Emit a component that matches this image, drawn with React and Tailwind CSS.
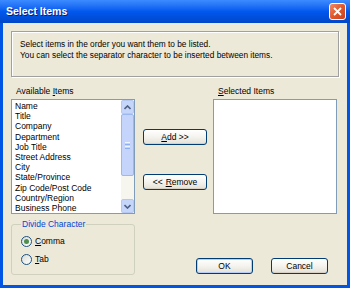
import { useState } from "react";

const items = [
  "Name",
  "Title",
  "Company",
  "Department",
  "Job Title",
  "Street Address",
  "City",
  "State/Province",
  "Zip Code/Post Code",
  "Country/Region",
  "Business Phone",
];

function XpButton({ children, className = "" }) {
  return (
    <button
      type="button"
      className={
        "flex items-center justify-center rounded-[3px] border border-[#003C74] bg-gradient-to-b from-white via-[#F4F3EE] to-[#E3E1D6] text-[8.5px] leading-none text-black shadow-[inset_0_-1px_0_#D6D0C5] " +
        className
      }
    >
      {children}
    </button>
  );
}

function ScrollBar() {
  return (
    <div className="flex w-[13px] flex-col bg-[#F6F5EE]">
      <div className="flex h-[14px] items-center justify-center rounded-[2px] border border-[#B5C8F2] bg-[#C6D6FB]">
        <svg width="7" height="5" viewBox="0 0 7 5">
          <path d="M0.5 4 L3.5 1 L6.5 4" fill="none" stroke="#4D6185" strokeWidth="1.6" />
        </svg>
      </div>
      <div className="flex h-[62px] flex-col items-center justify-center gap-[1px] rounded-[2px] border border-[#9DB7EF] bg-[#C4D4FA]">
        <div className="h-[1px] w-[5px] bg-[#EEF4FE]" />
        <div className="h-[1px] w-[5px] bg-[#8CB0F8]" />
        <div className="h-[1px] w-[5px] bg-[#EEF4FE]" />
        <div className="h-[1px] w-[5px] bg-[#8CB0F8]" />
      </div>
      <div className="flex-1" />
      <div className="flex h-[14px] items-center justify-center rounded-[2px] border border-[#B5C8F2] bg-[#C6D6FB]">
        <svg width="7" height="5" viewBox="0 0 7 5">
          <path d="M0.5 1 L3.5 4 L6.5 1" fill="none" stroke="#4D6185" strokeWidth="1.6" />
        </svg>
      </div>
    </div>
  );
}

function Radio({ checked, label, mnemonic }) {
  return (
    <div className="flex items-center gap-[3px]">
      <div className="flex h-[11px] w-[11px] items-center justify-center rounded-full border border-[#1C5180] bg-gradient-to-br from-[#DCDCD5] to-white">
        {checked && <div className="h-[5px] w-[5px] rounded-full bg-[#4F8E4F]" />}
      </div>
      <span className="text-[8.5px] leading-none text-black">
        <span className="underline">{mnemonic}</span>
        {label}
      </span>
    </div>
  );
}

export default function App() {
  const [divide] = useState("comma");

  return (
    <div
      className="flex h-[288px] w-[350px] flex-col overflow-hidden bg-[#0055E5]"
      style={{ fontFamily: '"Liberation Sans", Arial, sans-serif' }}
    >
      {/* title bar */}
      <div className="flex h-[23px] items-center justify-between bg-gradient-to-b from-[#3D8BFF] via-[#0058EE] to-[#0047C8] pl-[6px] pr-[4px]">
        <span className="text-[10.5px] font-bold text-white [text-shadow:1px_1px_0_#0A1E7C]">
          Select Items
        </span>
        <div className="flex h-[17px] w-[17px] items-center justify-center rounded-[3px] border border-white bg-gradient-to-br from-[#F08A66] via-[#E0582A] to-[#C8421E]">
          <svg width="9" height="9" viewBox="0 0 9 9">
            <path d="M1 1 L8 8 M8 1 L1 8" stroke="white" strokeWidth="1.8" />
          </svg>
        </div>
      </div>

      {/* client area */}
      <div className="mx-[3px] mb-[3px] flex flex-1 flex-col bg-[#ECE9D8] pl-[8px] pt-[8px] text-black">
        <div className="h-[46px] w-[328px] border border-[#A0A0A0] shadow-[inset_1px_1px_0_white,1px_1px_0_white] px-[8px] pt-[7px] text-[8.3px] leading-[11px]">
          <div>Select items in the order you want them to be listed.</div>
          <div>You can select the separator character to be inserted between items.</div>
        </div>

        <div className="flex">
          <div className="flex w-[124px] flex-col">
            <div className="h-[22px] pl-[5px] pt-[8px] text-[8.5px] leading-[12px]">
              Available <span className="underline">I</span>tems
            </div>
            <div className="flex h-[115px] border border-[#7F9DB9] bg-white">
              <div className="flex-1 pl-[3px] pt-[1px] text-[8.5px] leading-[10.2px]">
                {items.map((it) => (
                  <div key={it} className="whitespace-nowrap">
                    {it}
                  </div>
                ))}
              </div>
              <ScrollBar />
            </div>
          </div>

          <div className="ml-[8px] flex w-[64px] flex-col pt-[52px]">
            <XpButton className="h-[16px] w-[64px]">
              <span className="underline">A</span>
              {"dd >>"}
            </XpButton>
            <XpButton className="mt-[29px] h-[16px] w-[64px]">
              <span className="mr-[3px]">{"<<"}</span>
              <span className="underline">R</span>
              {"emove"}
            </XpButton>
          </div>

          <div className="ml-[6px] flex w-[124px] flex-col">
            <div className="h-[22px] pl-[5px] pt-[8px] text-[8.5px] leading-[12px]">
              <span className="underline">S</span>elected Items
            </div>
            <div className="h-[115px] border border-[#7F9DB9] bg-white" />
          </div>
        </div>

        <div className="mt-[5px] flex">
          <fieldset className="h-[56px] w-[124px] rounded-[3px] border border-[#D0D0BF] px-[9px] pt-[7px]">
            <legend className="px-[1px] text-[8.5px] leading-[10px] text-[#0046D5]">
              Divide Character
            </legend>
            <div className="flex flex-col gap-[7px]">
              <Radio checked={divide === "comma"} mnemonic="C" label="omma" />
              <Radio checked={divide === "tab"} mnemonic="T" label="ab" />
            </div>
          </fieldset>

          <div className="ml-[61px] flex items-end gap-[18px] pb-[1px]">
            <XpButton className="h-[16px] w-[57px] border-[#003C74] shadow-[inset_0_0_0_1px_#B6CDF7]">
              OK
            </XpButton>
            <XpButton className="h-[16px] w-[57px]">Cancel</XpButton>
          </div>
        </div>
      </div>
    </div>
  );
}
